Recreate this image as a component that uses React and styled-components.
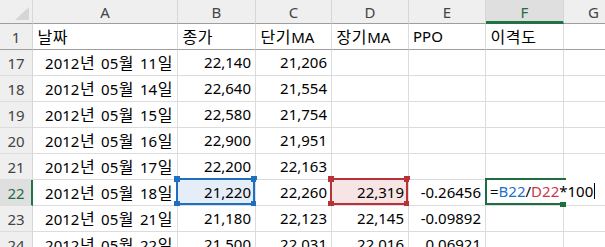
import React from 'react';
import styled, { createGlobalStyle } from 'styled-components';

const GlobalStyle = createGlobalStyle`
  body {
    margin: 0;
    background: #ffffff;
    overflow: hidden;
  }
`;

const FONT = `"Noto Sans", "Noto Sans CJK KR", sans-serif`;

const columns = ['A', 'B', 'C', 'D', 'E', 'F', 'G'];

const rows = [
  { n: 17, a: '2012년 05월 11일', b: '22,140', c: '21,206' },
  { n: 18, a: '2012년 05월 14일', b: '22,640', c: '21,554' },
  { n: 19, a: '2012년 05월 15일', b: '22,580', c: '21,754' },
  { n: 20, a: '2012년 05월 16일', b: '22,900', c: '21,951' },
  { n: 21, a: '2012년 05월 17일', b: '22,200', c: '22,163' },
  { n: 22, a: '2012년 05월 18일', b: '21,220', c: '22,260', d: '22,319', e: '-0.26456', editing: true },
  { n: 23, a: '2012년 05월 21일', b: '21,180', c: '22,123', d: '22,145', e: '-0.09892' },
  { n: 24, a: '2012년 05월 22일', b: '21,500', c: '22,031', d: '22,016', e: '0.06921' },
];

// Hangul runs get the wider CJK face, everything else stays in Noto Sans
const Txt = ({ children }) => {
  if (!children) return null;
  return (
    <Run>
      {String(children)
        .split(/([가-힣]+)/)
        .map((part, i) => (/[가-힣]/.test(part) ? <Hangul key={i}>{part}</Hangul> : part))}
    </Run>
  );
};

export default function App() {
  return (
    <>
      <GlobalStyle />
      <Sheet>
        <Corner>
          <svg width="33" height="24" viewBox="0 0 33 24">
            <polygon points="29,7 29,20 15,20" fill="#d6d6d6" />
          </svg>
        </Corner>
        {columns.map((c) => (
          <ColHeader key={c} $active={c === 'F'}>{c}</ColHeader>
        ))}

        <RowHeader $frozen>1</RowHeader>
        {['날짜', '종가', '단기MA', '장기MA', 'PPO', '이격도', ''].map((h, i) => (
          <Cell key={i} $frozen><Txt>{h}</Txt></Cell>
        ))}

        {rows.map((r) => (
          <React.Fragment key={r.n}>
            <RowHeader $active={r.editing}>{r.n}</RowHeader>
            <Cell $right><Txt>{r.a}</Txt></Cell>
            <Cell $right $fill={r.editing ? '#e4edf8' : null}>
              {r.b}
              {r.editing && <RefBox color="#1f6fc1" />}
            </Cell>
            <Cell $right>{r.c}</Cell>
            <Cell $right $fill={r.editing ? '#f7e4e4' : null}>
              {r.d}
              {r.editing && <RefBox color="#b9323a" />}
            </Cell>
            <Cell $right>{r.e}</Cell>
            <Cell>
              {r.editing && (
                <EditBox>
                  <EditFrame>
                    <FillHandle />
                  </EditFrame>
                  <Formula>
                    =<Ref $color="#1f6fc9">B22</Ref>/<Ref $color="#c83a4a">D22</Ref>*100
                  </Formula>
                  <Caret />
                </EditBox>
              )}
            </Cell>
            <Cell />
          </React.Fragment>
        ))}
      </Sheet>
    </>
  );
}

const RefBox = ({ color }) => (
  <RefFrame $color={color}>
    <Knob $color={color} style={{ left: -4, top: -4 }} />
    <Knob $color={color} style={{ right: -4, top: -4 }} />
    <Knob $color={color} style={{ left: -4, bottom: -4 }} />
    <Knob $color={color} style={{ right: -4, bottom: -4 }} />
  </RefFrame>
);

const Sheet = styled.div`
  display: grid;
  grid-template-columns: 33px 145px 78px 76px 77px 77px 78px 60px;
  grid-template-rows: 24px 26px;
  grid-auto-rows: 26px;
  width: 605px;
  height: 247px;
  overflow: hidden;
  font-family: ${FONT};
  font-size: 15px;
  color: #000;
`;

const Run = styled.span`
  white-space: pre;
  word-spacing: 2px;
`;

const Hangul = styled.span`
  font-family: "Noto Sans CJK KR", sans-serif;
  font-size: 16px;
  letter-spacing: 0.6px;
  margin-left: 0.5px;
`;

const Corner = styled.div`
  box-sizing: border-box;
  background: #efefef;
  border-right: 1px solid #d8d8d8;
  border-bottom: 1px solid #9e9e9e;
  svg {
    display: block;
  }
`;

const ColHeader = styled.div`
  box-sizing: border-box;
  display: flex;
  align-items: center;
  justify-content: center;
  background: ${(p) => (p.$active ? '#dfdfdf' : '#efefef')};
  color: ${(p) => (p.$active ? '#1e6e42' : '#444444')};
  border-right: 1px solid #d6d6d6;
  border-bottom: ${(p) => (p.$active ? '3px solid #217346' : '1px solid #9e9e9e')};
  padding-top: ${(p) => (p.$active ? '2px' : '0')};
`;

const RowHeader = styled.div`
  box-sizing: border-box;
  display: flex;
  align-items: center;
  justify-content: center;
  background: ${(p) => (p.$active ? '#dfdfdf' : '#efefef')};
  color: ${(p) => (p.$active ? '#1e6e42' : '#444444')};
  border-right: ${(p) => (p.$active ? '2px solid #217346' : '1px solid #d6d6d6')};
  border-bottom: 1px solid ${(p) => (p.$frozen ? '#9e9e9e' : '#dcdcdc')};
  padding-left: ${(p) => (p.$active ? '1px' : '0')};
`;

const Cell = styled.div`
  position: relative;
  box-sizing: border-box;
  display: flex;
  align-items: center;
  justify-content: ${(p) => (p.$right ? 'flex-end' : 'flex-start')};
  padding: 0 4px 1px 4px;
  white-space: nowrap;
  background: ${(p) => p.$fill || '#ffffff'};
  border-right: 1px solid #dcdcdc;
  border-bottom: 1px solid ${(p) => (p.$frozen ? '#9e9e9e' : '#dcdcdc')};
`;

const RefFrame = styled.div`
  position: absolute;
  left: -2px;
  top: -2px;
  right: 0;
  bottom: 0;
  border: 2px solid ${(p) => p.$color};
  pointer-events: none;
`;

const Knob = styled.span`
  position: absolute;
  width: 6px;
  height: 6px;
  background: ${(p) => p.$color};
`;

const EditBox = styled.div`
  position: absolute;
  left: -1px;
  top: -2px;
  bottom: 0;
  width: 120px;
  z-index: 2;
  display: flex;
  align-items: center;
  padding: 0 0 1px 5px;
  box-sizing: border-box;
  background: #ffffff;
`;

const EditFrame = styled.div`
  position: absolute;
  left: 0;
  top: 0;
  bottom: 0;
  width: 79px;
  border-top: 2px solid #1e6e42;
  border-bottom: 2px solid #1e6e42;
  border-left: 2px solid #1e6e42;
`;

const Formula = styled.span`
  position: relative;
`;

const Ref = styled.span`
  color: ${(p) => p.$color};
`;

const Caret = styled.span`
  position: relative;
  display: inline-block;
  width: 1px;
  height: 16px;
  margin-left: 1px;
  background: #000;
`;

const FillHandle = styled.span`
  position: absolute;
  right: 0;
  bottom: -4px;
  width: 6px;
  height: 5px;
  background: #1e6e42;
`;
